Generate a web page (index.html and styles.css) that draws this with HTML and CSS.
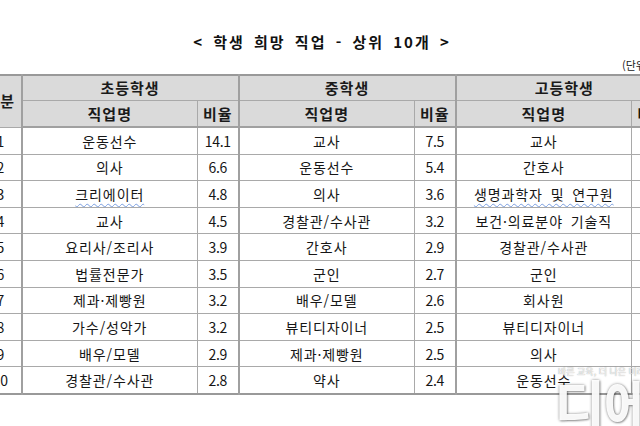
FILE: index.html
```html
<!DOCTYPE html>
<html lang="ko">
<head>
<meta charset="utf-8">
<link rel="stylesheet" href="styles.css">
</head>
<body>
<div class="page">
  <h1 class="title">&lt; 학생 희망 직업 - 상위 10개 &gt;</h1>
  <div class="unit">(단위: %)</div>
  <table class="grid">
    <colgroup>
      <col class="c-no">
      <col class="c-job"><col class="c-rate">
      <col class="c-job"><col class="c-rate">
      <col class="c-job"><col class="c-rate">
    </colgroup>
    <thead>
      <tr class="h1">
        <th rowspan="2" class="no">구분</th>
        <th colspan="2" class="grp">초등학생</th>
        <th colspan="2" class="grp">중학생</th>
        <th colspan="2" class="grp">고등학생</th>
      </tr>
      <tr class="h2">
        <th class="grp-l">직업명</th><th>비율</th>
        <th class="grp-l">직업명</th><th>비율</th>
        <th class="grp-l">직업명</th><th>비율</th>
      </tr>
    </thead>
    <tbody>
      <tr><td class="no">1</td><td class="grp-l">운동선수</td><td class="num">14.1</td><td class="grp-l">교사</td><td class="num">7.5</td><td class="grp-l">교사</td><td class="num">8.7</td></tr>
      <tr><td class="no">2</td><td class="grp-l">의사</td><td class="num">6.6</td><td class="grp-l">운동선수</td><td class="num">5.4</td><td class="grp-l">간호사</td><td class="num">5.2</td></tr>
      <tr><td class="no">3</td><td class="grp-l"><span class="spell">크리에이터</span></td><td class="num">4.8</td><td class="grp-l">의사</td><td class="num">3.6</td><td class="grp-l"><span class="spell">생명과학자 및 연구원</span></td><td class="num">3.6</td></tr>
      <tr><td class="no">4</td><td class="grp-l">교사</td><td class="num">4.5</td><td class="grp-l">경찰관/수사관</td><td class="num">3.2</td><td class="grp-l">보건·의료분야 기술직</td><td class="num">3.3</td></tr>
      <tr><td class="no">5</td><td class="grp-l">요리사/조리사</td><td class="num">3.9</td><td class="grp-l">간호사</td><td class="num">2.9</td><td class="grp-l">경찰관/수사관</td><td class="num">3.1</td></tr>
      <tr><td class="no">6</td><td class="grp-l">법률전문가</td><td class="num">3.5</td><td class="grp-l">군인</td><td class="num">2.7</td><td class="grp-l">군인</td><td class="num">2.9</td></tr>
      <tr><td class="no">7</td><td class="grp-l">제과·제빵원</td><td class="num">3.2</td><td class="grp-l">배우/모델</td><td class="num">2.6</td><td class="grp-l">회사원</td><td class="num">2.7</td></tr>
      <tr><td class="no">8</td><td class="grp-l">가수/성악가</td><td class="num">3.2</td><td class="grp-l">뷰티디자이너</td><td class="num">2.5</td><td class="grp-l">뷰티디자이너</td><td class="num">2.6</td></tr>
      <tr><td class="no">9</td><td class="grp-l">배우/모델</td><td class="num">2.9</td><td class="grp-l">제과·제빵원</td><td class="num">2.5</td><td class="grp-l">의사</td><td class="num">2.5</td></tr>
      <tr><td class="no">10</td><td class="grp-l">경찰관/수사관</td><td class="num">2.8</td><td class="grp-l">약사</td><td class="num">2.4</td><td class="grp-l">운동선수</td><td class="num">2.4</td></tr>
    </tbody>
  </table>
  <div class="mark">
    <div class="mark-sub">바른 교육, 더 나은 미래</div>
    <div class="mark-big">디에듀</div>
  </div>
</div>
</body>
</html>
```

FILE: styles.css
```css
html, body {
  margin: 0;
  padding: 0;
  background: #ffffff;
}
body {
  width: 640px;
  height: 426px;
  overflow: hidden;
  font-family: "Noto Sans CJK KR", "Noto Sans", sans-serif;
  color: #161616;
}
.page {
  position: relative;
  width: 640px;
  height: 426px;
  overflow: hidden;
}
.title {
  margin: 0;
  padding-top: 31px;
  padding-left: 4px;
  height: 22px;
  line-height: 22px;
  font-size: 15px;
  font-weight: bold;
  text-align: center;
  letter-spacing: 2px;
  word-spacing: 3px;
  color: #111;
}
.unit {
  margin-top: 4px;
  padding-left: 622px;
  height: 17px;
  line-height: 17px;
  font-size: 11px;
  white-space: nowrap;
  color: #222;
}
.grid {
  margin-left: -21px;
  width: 693px;
  table-layout: fixed;
  border-collapse: collapse;
  border-top: 2px solid #999;
  border-bottom: 2px solid #999;
}
.c-no { width: 42px; }
.c-job { width: 176px; }
.c-rate { width: 41px; }
th, td {
  padding: 0;
  text-align: center;
  white-space: nowrap;
  border: 1px solid #a9a9a9;
  overflow: hidden;
}
th {
  background: #dadada;
  font-size: 15px;
  font-weight: 600;
  letter-spacing: 1px;
  color: #1a1a1a;
}
.h1 { height: 25px; }
.h2 { height: 27px; }
.h2 th { border-bottom: 2px solid #a0a0a0; }
.h1 th { line-height: 20px; }
td {
  height: 25.6px;
  font-size: 14px;
  letter-spacing: 0.9px;
  word-spacing: 3px;
  line-height: 20px;
}
td.num, td.no {
  letter-spacing: -0.3px;
}
.grp, .grp-l { border-left: 2px solid #a0a0a0; }
.spell {
  text-decoration: underline wavy #7a9ee0;
  text-decoration-thickness: 1px;
  text-underline-offset: 3px;
}
.mark {
  position: absolute;
  left: 554px;
  top: 366px;
  white-space: nowrap;
}
.mark-sub {
  font-size: 9px;
  line-height: 11px;
  color: rgba(255, 255, 255, 0.9);
  text-shadow: 0 0 1px rgba(0, 0, 0, 0.5);
  padding-left: 4px;
}
.mark-big {
  font-size: 56px;
  line-height: 52px;
  font-weight: bold;
  color: rgba(255, 255, 255, 0.95);
  text-shadow: 0 0 3px rgba(0, 0, 0, 0.45), 1px 1px 2px rgba(0, 0, 0, 0.3);
  letter-spacing: -2px;
}
```
